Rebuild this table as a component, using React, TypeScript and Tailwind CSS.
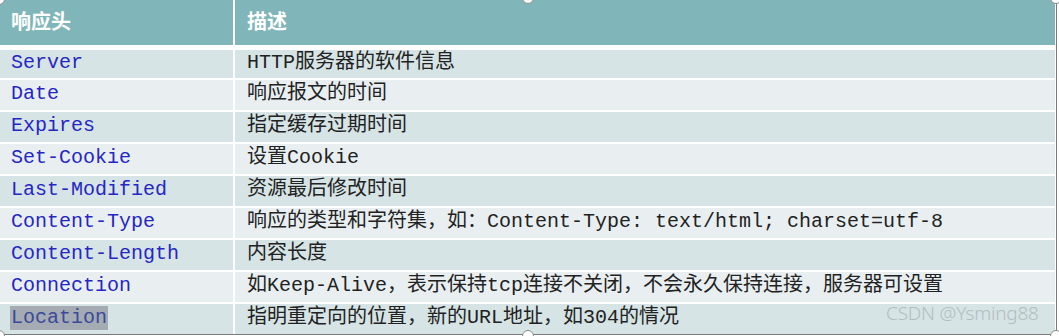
import React from "react";

const rows: [string, React.ReactNode][] = [
  ["Server", <>HTTP服务器的软件信息</>],
  ["Date", <>响应报文的时间</>],
  ["Expires", <>指定缓存过期时间</>],
  ["Set-Cookie", <>设置Cookie</>],
  ["Last-Modified", <>资源最后修改时间</>],
  ["Content-Type", <>响应的类型和字符集，如：Content-Type: text/html; charset=utf-8</>],
  ["Content-Length", <>内容长度</>],
  ["Connection", <>如Keep-Alive，表示保持tcp连接不关闭，不会永久保持连接，服务器可设置</>],
  ["Location", <>指明重定向的位置，新的URL地址，如304的情况</>],
];

const font = { fontFamily: '"Liberation Mono", "Noto Sans CJK SC", monospace' };

function Handle({ cls }: { cls: string }) {
  return <div className={`absolute w-[12px] h-[12px] rounded-full bg-white border border-[#8a8a8a] ${cls}`} />;
}

export default function App() {
  return (
    <div className="relative w-[1059px] h-[336px] bg-white overflow-hidden" style={font}>
      <div className="w-[1057px] h-[335px] border-r border-b border-[#7a7a7a]">
        <div className="w-[1055px] flex flex-col">
          <div className="grid grid-cols-[233px_1fr] gap-x-[2px] h-[45px]">
            <div
              className="bg-[#80b6b9] text-white font-bold text-[20px] pl-[11px] flex items-center pb-[3px]"
              style={{ fontFamily: '"Noto Sans CJK SC", sans-serif' }}
            >
              响应头
            </div>
            <div
              className="bg-[#80b6b9] text-white font-bold text-[20px] pl-[12px] flex items-center pb-[3px]"
              style={{ fontFamily: '"Noto Sans CJK SC", sans-serif' }}
            >
              描述
            </div>
          </div>
          <div className="mt-[5px] flex flex-col gap-y-[2px]">
            {rows.map(([k, v], i) => {
              const bg = i % 2 === 0 ? "bg-[#d6e4e5]" : "bg-[#e9eff1]";
              const h = i === 0 ? "h-[28px]" : "h-[30px]";
              return (
                <div key={k} className={`grid grid-cols-[233px_1fr] gap-x-[2px] ${h}`}>
                  <div className={`${bg} pl-[10px] flex items-center ${i === 0 ? "pb-[2px]" : "pb-[3px]"} text-[20px] leading-none text-[#2626c4]`}>
                    {k === "Location" ? (
                      <span className="bg-[#a4abb3] text-[#3b4a9a] px-[1px] py-[2px]">{k}</span>
                    ) : (
                      <span className="pl-[1px]">{k}</span>
                    )}
                  </div>
                  <div className={`${bg} pl-[12px] flex items-center ${i === 0 ? "pb-[2px]" : "pb-[3px]"} text-[20px] leading-none text-[#222222] whitespace-nowrap`}>
                    {v}
                  </div>
                </div>
              );
            })}
          </div>
        </div>
      </div>
      <div
        className="absolute left-[886px] top-[304px] text-[19px] text-[#b3bdc0] leading-none tracking-[-0.2px]"
        style={{ fontFamily: '"Noto Sans", "Liberation Sans", sans-serif', fontWeight: 300 }}
      >
        CSDN @Ysming88
      </div>
      <Handle cls="left-[-7px] top-[-7px]" />
      <Handle cls="left-[522px] top-[-8px]" />
      <Handle cls="left-[1050px] top-[-8px]" />
      <Handle cls="left-[-7px] top-[330px]" />
      <Handle cls="left-[522px] top-[330px]" />
      <Handle cls="left-[1050px] top-[330px]" />
    </div>
  );
}
